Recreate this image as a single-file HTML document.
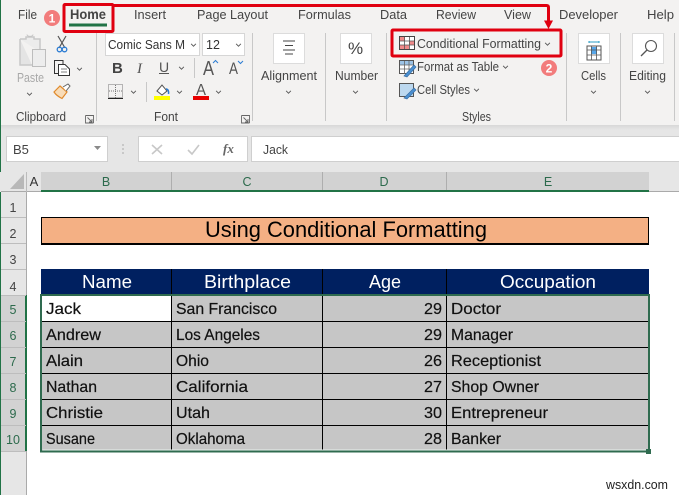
<!DOCTYPE html>
<html><head><meta charset="utf-8"><style>
html,body{margin:0;padding:0;width:679px;height:495px;overflow:hidden;background:#fff}
svg{display:block}
text{font-family:"Liberation Sans",sans-serif}
.t{font-size:13px;fill:#444}
.d{font-size:16px;fill:#111;stroke:#111;stroke-width:.2px}
.h{font-size:18.500px;fill:#fff}
.r{font-size:12.500px;fill:#444;text-anchor:middle}
.s{font-size:12.500px;fill:#2c6a4c;text-anchor:middle}
</style></head><body>
<svg width="679" height="495" viewBox="0 0 679 495" xmlns="http://www.w3.org/2000/svg">
<defs><linearGradient id="sh" x1="0" y1="0" x2="0" y2="1"><stop offset="0" stop-color="#d8d8d8"/><stop offset="1" stop-color="#e6e6e6"/></linearGradient>
<symbol id="chev" viewBox="0 0 8 5" overflow="visible"><path d="M1 1L4 4L7 1" fill="none" stroke="#555" stroke-width="1.100"/></symbol></defs>

<!-- ribbon -->
<rect width="679" height="125" fill="#f3f2f1"/>
<rect y="125" width="679" height="5" fill="url(#sh)"/>
<rect y="130" width="679" height="62" fill="#e6e6e6"/>
<rect x="0" y="0" width="1" height="495" fill="#217346"/>

<!-- tabs -->
<text class="t" x="18" y="19" textLength="19" lengthAdjust="spacingAndGlyphs">File</text>
<text x="70" y="19" font-size="13.500" font-weight="bold" fill="#444" textLength="36" lengthAdjust="spacingAndGlyphs">Home</text>
<rect x="69" y="23.500" width="38" height="3" fill="#217346"/>
<text class="t" x="134" y="19" textLength="32" lengthAdjust="spacingAndGlyphs">Insert</text>
<text class="t" x="197" y="19" textLength="71" lengthAdjust="spacingAndGlyphs">Page Layout</text>
<text class="t" x="298" y="19" textLength="53" lengthAdjust="spacingAndGlyphs">Formulas</text>
<text class="t" x="380" y="19" textLength="27" lengthAdjust="spacingAndGlyphs">Data</text>
<text class="t" x="436" y="19" textLength="40" lengthAdjust="spacingAndGlyphs">Review</text>
<text class="t" x="504" y="19" textLength="27" lengthAdjust="spacingAndGlyphs">View</text>
<text class="t" x="559" y="19" textLength="59" lengthAdjust="spacingAndGlyphs">Developer</text>
<text class="t" x="647" y="19" textLength="27" lengthAdjust="spacingAndGlyphs">Help</text>

<!-- separators -->
<g fill="#c8c8c8"><rect x="96" y="33" width="1" height="88"/><rect x="252" y="33" width="1" height="88"/><rect x="325" y="33" width="1" height="88"/><rect x="386" y="33" width="1" height="88"/><rect x="566" y="33" width="1" height="88"/><rect x="620" y="33" width="1" height="88"/><rect x="674" y="33" width="1" height="88"/><rect x="194" y="58" width="1" height="20"/><rect x="146" y="82" width="1" height="20"/></g>

<!-- clipboard -->
<path d="M20 39H26V37H34V39H40V52" fill="#ececec" stroke="#c8c8c8" stroke-width="1.500"/>
<path d="M20 39V65H32" fill="#e4e4e4" stroke="#c8c8c8" stroke-width="1.500"/>
<path d="M27 34.500C27 37 33 37 33 34.500" fill="none" stroke="#c4c4c4"/>
<rect x="32.500" y="49.500" width="13" height="17" fill="#ededed" stroke="#bdbdbd"/>
<text x="17" y="82" font-size="12.500" fill="#a8a8a8" textLength="27" lengthAdjust="spacingAndGlyphs">Paste</text>
<use href="#chev" x="26" y="92" width="7" height="4"/>
<path d="M58 36L65 48M66 36L59 48" stroke="#555" stroke-width="1.200" fill="none"/>
<circle cx="59.500" cy="49.500" r="2.300" fill="none" stroke="#2b7cd3" stroke-width="1.300"/>
<circle cx="64.500" cy="49.500" r="2.300" fill="none" stroke="#2b7cd3" stroke-width="1.300"/>
<path d="M58.500 73.500H54.500V60.500H63V64" fill="none" stroke="#333"/>
<path d="M58.500 64.500H65L69.500 69V75.500H58.500Z" fill="#fff" stroke="#333"/>
<path d="M61 69H67M61 72H67" stroke="#555" stroke-width=".8"/>
<use href="#chev" x="76" y="67" width="7" height="4"/>
<path d="M54 92L60 86L67 92L62 98.500C59 97 56 95 54 92Z" fill="#f8dcb8" stroke="#e08a2c" stroke-width="1.200"/>
<path d="M63 87L68 84L70 86L66 91" fill="#fff" stroke="#666"/>
<text x="16" y="121" font-size="12.500" fill="#444" textLength="50" lengthAdjust="spacingAndGlyphs">Clipboard</text>
<path d="M85.500 115.500H93.500V123M85.500 115.500V123H93.500M87.500 117.500L92 122M92 119V122H89" fill="none" stroke="#666" stroke-width=".9"/>

<!-- font -->
<rect x="105.500" y="33.500" width="94" height="22" fill="#fff" stroke="#d6d6d6"/>
<rect x="202.500" y="33.500" width="42" height="22" fill="#fff" stroke="#d6d6d6"/>
<text x="108" y="49" font-size="12.500" fill="#333" textLength="77" lengthAdjust="spacingAndGlyphs">Comic Sans M</text>
<use href="#chev" x="190" y="43" width="7" height="4"/>
<text x="206" y="49" font-size="12.500" fill="#333">12</text>
<use href="#chev" x="235" y="43" width="7" height="4"/>
<text x="112" y="73" font-size="15" font-weight="bold" fill="#444">B</text>
<text x="137" y="73" font-size="15" font-style="italic" fill="#555" style="font-family:'Liberation Serif',serif">I</text>
<text x="159" y="72" font-size="14" fill="#555">U</text><rect x="159" y="73" width="10" height="1" fill="#555"/>
<use href="#chev" x="178" y="66" width="7" height="4"/>
<text x="203" y="75" font-size="20" fill="#555" textLength="11" lengthAdjust="spacingAndGlyphs">A</text>
<path d="M213 63L215.500 60.500L218 63" fill="none" stroke="#2b7cd3"/>
<text x="229" y="74" font-size="17" fill="#555" textLength="9" lengthAdjust="spacingAndGlyphs">A</text>
<path d="M238 61L240.500 63.500L243 61" fill="none" stroke="#2b7cd3"/>
<rect x="108.500" y="84.500" width="14" height="13" fill="none" stroke="#777" stroke-dasharray="1 1"/>
<path d="M115.500 85V98M109 91H122" stroke="#777" stroke-dasharray="1 1"/>
<rect x="108" y="98" width="15" height="1" fill="#222"/>
<use href="#chev" x="130" y="90" width="7" height="4"/>
<path d="M157 91L162 85L167 91L162 95Z" fill="#fff" stroke="#555"/>
<path d="M166 89C168 89 169 91 168.500 94" fill="none" stroke="#2b7cd3" stroke-width="1.500"/>
<rect x="154" y="96" width="16" height="4" fill="#ffff00"/>
<use href="#chev" x="176" y="90" width="7" height="4"/>
<text x="196" y="95" font-size="16" fill="#555" textLength="10" lengthAdjust="spacingAndGlyphs">A</text>
<rect x="193" y="96" width="16" height="4" fill="#e80000"/>
<use href="#chev" x="215" y="90" width="7" height="4"/>
<text x="154" y="121" font-size="12.500" fill="#444" textLength="24" lengthAdjust="spacingAndGlyphs">Font</text>
<path d="M241.500 115.500H249.500V123M241.500 115.500V123H249.500M243.500 117.500L248 122M248 119V122H245" fill="none" stroke="#666" stroke-width=".9"/>

<!-- alignment -->
<rect x="273.500" y="33.500" width="31" height="30" fill="#fff" stroke="#dcdcdc"/>
<path d="M283 41H295M285 45.500H293M283 50H295M285 54H293" stroke="#444"/>
<text class="t" x="261" y="80" textLength="56" lengthAdjust="spacingAndGlyphs">Alignment</text>
<use href="#chev" x="285" y="90" width="7" height="4"/>

<!-- number -->
<rect x="340.500" y="33.500" width="31" height="30" fill="#fff" stroke="#dcdcdc"/>
<text x="348" y="54" font-size="17" fill="#444">%</text>
<text class="t" x="335" y="80" textLength="43" lengthAdjust="spacingAndGlyphs">Number</text>
<use href="#chev" x="352" y="90" width="7" height="4"/>

<!-- styles -->
<rect x="399.500" y="36.500" width="15" height="13" fill="#fff" stroke="#444"/>
<rect x="400" y="37" width="5" height="4" fill="#f08a8a"/><rect x="409" y="41" width="5" height="4" fill="#f08a8a"/><rect x="400" y="45" width="9" height="4" fill="#f08a8a"/>
<path d="M404.500 37V49M409.500 37V49M400 41H414M400 45H414" stroke="#555" stroke-width=".8"/>
<text class="t" x="417" y="48" textLength="124" lengthAdjust="spacingAndGlyphs">Conditional Formatting</text>
<use href="#chev" x="544" y="42" width="7" height="4"/>
<rect x="399.500" y="60.500" width="14" height="13" fill="#fff" stroke="#555"/>
<rect x="400" y="61" width="13" height="4" fill="#9cc3e6"/>
<path d="M404.500 61V74M409 61V74M400 65H413M400 69H413" stroke="#666" stroke-width=".8"/>
<path d="M404 76L414 65L416 67L407 77Z" fill="#4a8fd0" stroke="#3a6fa5" stroke-width=".7"/>
<text class="t" x="417" y="71" textLength="82" lengthAdjust="spacingAndGlyphs">Format as Table</text>
<use href="#chev" x="502" y="65" width="7" height="4"/>
<rect x="399.500" y="83.500" width="14" height="13" fill="#bcd8ef" stroke="#555"/>
<path d="M404 98L414 88L416 90L407 99Z" fill="#4a8fd0" stroke="#3a6fa5" stroke-width=".7"/>
<text class="t" x="417" y="94" textLength="53" lengthAdjust="spacingAndGlyphs">Cell Styles</text>
<use href="#chev" x="473" y="88" width="7" height="4"/>
<text x="462" y="121" font-size="12.500" fill="#444" textLength="29" lengthAdjust="spacingAndGlyphs">Styles</text>

<!-- cells -->
<rect x="578.500" y="33.500" width="31" height="30" fill="#fff" stroke="#dcdcdc"/>
<rect x="587" y="46" width="14" height="14" fill="#fff" stroke="#555"/>
<rect x="591" y="47" width="6" height="7" fill="#55a6ea"/>
<path d="M591.500 46V60M596.500 46V60M587 50H601M587 55H601" stroke="#555" stroke-width=".8"/>
<path d="M589 42H599M589 41V43M599 41V43" stroke="#2b9cc4"/>
<text class="t" x="581" y="80" textLength="25" lengthAdjust="spacingAndGlyphs">Cells</text>
<use href="#chev" x="590" y="90" width="7" height="4"/>

<!-- editing -->
<rect x="632.500" y="33.500" width="31" height="30" fill="#fff" stroke="#dcdcdc"/>
<circle cx="651" cy="46" r="5.500" fill="none" stroke="#555" stroke-width="1.100"/>
<path d="M647 50L641 56" stroke="#555" stroke-width="1.300"/>
<text class="t" x="629" y="80" textLength="37" lengthAdjust="spacingAndGlyphs">Editing</text>
<use href="#chev" x="644" y="90" width="7" height="4"/>

<!-- red annotations -->
<rect x="64" y="4.500" width="49" height="27" fill="none" stroke="#e00010" stroke-width="3" rx="1"/>
<path d="M113 5.500H546.500Q548.500 5.500 548.500 7.500V22" fill="none" stroke="#e00010" stroke-width="3"/>
<path d="M544 20.500H553L548.500 29Z" fill="#e00010"/>
<rect x="392" y="30" width="169" height="26" fill="none" stroke="#e00010" stroke-width="3" rx="1"/>
<circle cx="52" cy="18" r="8" fill="#f27c7c"/>
<text x="52" y="22.500" font-size="12" font-weight="bold" fill="#fff" text-anchor="middle">1</text>
<circle cx="549" cy="68" r="8" fill="#f27c7c"/>
<text x="549" y="72.500" font-size="12" font-weight="bold" fill="#fff" text-anchor="middle">2</text>

<!-- formula bar -->
<rect x="6.500" y="136.500" width="101" height="25" fill="#fff" stroke="#cfcfcf"/>
<text x="13" y="154" font-size="13" fill="#444">B5</text>
<path d="M94 146H101L97.500 150Z" fill="#8a8a8a"/>
<path d="M123 144.500V145.500M123 148.500V149.500M123 152.500V153.500" stroke="#aaa" stroke-width="2"/>
<rect x="138.500" y="136.500" width="109" height="25" fill="#fff" stroke="#cfcfcf"/>
<path d="M152 145L162 154M162 145L152 154" stroke="#c8c8c8" stroke-width="1.600"/>
<path d="M188 150L192 154L199 145" fill="none" stroke="#c8c8c8" stroke-width="1.600"/>
<text x="223" y="153" font-size="13" font-style="italic" fill="#666" style="font-family:'Liberation Serif',serif" font-weight="bold">fx</text>
<rect x="251.500" y="136.500" width="428" height="25" fill="#fff" stroke="#cfcfcf"/>
<text x="263" y="154" font-size="13" fill="#444" textLength="25" lengthAdjust="spacingAndGlyphs">Jack</text>

<!-- col headers -->
<rect x="0" y="172" width="679" height="20" fill="#e6e6e6"/>
<rect x="1" y="191" width="678" height="1" fill="#aaa"/>
<path d="M24 174V189H10Z" fill="#b8b8b8"/>
<rect x="26" y="172" width="1" height="20" fill="#bbb"/>
<rect x="41" y="172" width="608" height="18" fill="#d2d2d2"/>
<rect x="41" y="190" width="608" height="2" fill="#217346"/>
<rect x="171" y="172" width="1" height="18" fill="#aeaeae"/><rect x="322" y="172" width="1" height="18" fill="#aeaeae"/><rect x="446" y="172" width="1" height="18" fill="#aeaeae"/>
<text x="34" y="186" font-size="13" fill="#333" text-anchor="middle">A</text>
<text class="s" x="106" y="186">B</text><text class="s" x="247" y="186">C</text><text class="s" x="384" y="186">D</text><text class="s" x="548" y="186">E</text>

<!-- row headers -->
<rect x="1" y="192" width="25" height="303" fill="#e6e6e6"/>
<rect x="26" y="192" width="1" height="303" fill="#aaa"/>
<rect x="1" y="295" width="25" height="156" fill="#d2d2d2"/>
<rect x="25" y="295" width="2" height="156" fill="#217346"/>
<g fill="#bdbdbd"><rect x="1" y="217" width="25" height="1"/><rect x="1" y="243" width="25" height="1"/><rect x="1" y="269" width="25" height="1"/><rect x="1" y="295" width="25" height="1"/><rect x="1" y="321" width="25" height="1"/><rect x="1" y="347" width="25" height="1"/><rect x="1" y="373" width="25" height="1"/><rect x="1" y="399" width="25" height="1"/><rect x="1" y="425" width="25" height="1"/><rect x="1" y="451" width="25" height="1"/></g>
<text class="r" x="13" y="212">1</text><text class="r" x="13" y="238">2</text><text class="r" x="13" y="264">3</text><text class="r" x="13" y="291">4</text>
<text class="s" x="13" y="314">5</text><text class="s" x="13" y="340">6</text><text class="s" x="13" y="366">7</text><text class="s" x="13" y="392">8</text><text class="s" x="13" y="418">9</text><text class="s" x="13" y="444">10</text>

<!-- title -->
<rect x="41.500" y="217.500" width="607" height="26" fill="#f4b084" stroke="#000"/>
<rect x="41" y="244" width="608" height="1" fill="#000"/>
<text x="205" y="237" font-size="22" fill="#000" textLength="282" lengthAdjust="spacingAndGlyphs">Using Conditional Formatting</text>

<!-- table -->
<rect x="41" y="269" width="608" height="26" fill="#002060"/>
<rect x="171" y="269" width="1" height="26" fill="#000"/><rect x="322" y="269" width="1" height="26" fill="#000"/><rect x="446" y="269" width="1" height="26" fill="#000"/>
<text class="h" x="82" y="288" textLength="50" lengthAdjust="spacingAndGlyphs">Name</text>
<text class="h" x="204" y="288" textLength="87" lengthAdjust="spacingAndGlyphs">Birthplace</text>
<text class="h" x="369" y="288" textLength="32" lengthAdjust="spacingAndGlyphs">Age</text>
<text class="h" x="500" y="288" textLength="96" lengthAdjust="spacingAndGlyphs">Occupation</text>

<rect x="41" y="295" width="608" height="156" fill="#c6c6c6"/>
<rect x="42" y="296" width="129" height="25" fill="#fff"/>
<g fill="#000"><rect x="42" y="321" width="606" height="1"/><rect x="42" y="347" width="606" height="1"/><rect x="42" y="373" width="606" height="1"/><rect x="42" y="399" width="606" height="1"/><rect x="42" y="425" width="606" height="1"/>
<rect x="171" y="296" width="1" height="154"/><rect x="322" y="296" width="1" height="154"/><rect x="446" y="296" width="1" height="154"/></g>

<text class="d" x="46" y="314" textLength="35" lengthAdjust="spacingAndGlyphs">Jack</text>
<text class="d" x="46" y="340" textLength="55" lengthAdjust="spacingAndGlyphs">Andrew</text>
<text class="d" x="46" y="366" textLength="37" lengthAdjust="spacingAndGlyphs">Alain</text>
<text class="d" x="46" y="392" textLength="51" lengthAdjust="spacingAndGlyphs">Nathan</text>
<text class="d" x="46" y="418" textLength="57" lengthAdjust="spacingAndGlyphs">Christie</text>
<text class="d" x="46" y="444" textLength="49" lengthAdjust="spacingAndGlyphs">Susane</text>

<text class="d" x="176" y="314" textLength="101" lengthAdjust="spacingAndGlyphs">San Francisco</text>
<text class="d" x="176" y="340" textLength="84" lengthAdjust="spacingAndGlyphs">Los Angeles</text>
<text class="d" x="176" y="366" textLength="33" lengthAdjust="spacingAndGlyphs">Ohio</text>
<text class="d" x="176" y="392" textLength="72" lengthAdjust="spacingAndGlyphs">California</text>
<text class="d" x="176" y="418" textLength="34" lengthAdjust="spacingAndGlyphs">Utah</text>
<text class="d" x="176" y="444" textLength="69" lengthAdjust="spacingAndGlyphs">Oklahoma</text>

<text class="d" x="424" y="314" textLength="18" lengthAdjust="spacingAndGlyphs">29</text>
<text class="d" x="424" y="340" textLength="18" lengthAdjust="spacingAndGlyphs">29</text>
<text class="d" x="424" y="366" textLength="18" lengthAdjust="spacingAndGlyphs">26</text>
<text class="d" x="424" y="392" textLength="18" lengthAdjust="spacingAndGlyphs">27</text>
<text class="d" x="424" y="418" textLength="18" lengthAdjust="spacingAndGlyphs">30</text>
<text class="d" x="424" y="444" textLength="18" lengthAdjust="spacingAndGlyphs">28</text>

<text class="d" x="451" y="314" textLength="50" lengthAdjust="spacingAndGlyphs">Doctor</text>
<text class="d" x="451" y="340" textLength="62" lengthAdjust="spacingAndGlyphs">Manager</text>
<text class="d" x="451" y="366" textLength="90" lengthAdjust="spacingAndGlyphs">Receptionist</text>
<text class="d" x="451" y="392" textLength="88" lengthAdjust="spacingAndGlyphs">Shop Owner</text>
<text class="d" x="451" y="418" textLength="97" lengthAdjust="spacingAndGlyphs">Entrepreneur</text>
<text class="d" x="451" y="444" textLength="50" lengthAdjust="spacingAndGlyphs">Banker</text>

<!-- selection -->
<rect x="41" y="295" width="608" height="156.500" fill="none" stroke="#2f6b4f" stroke-width="2"/>
<rect x="42.500" y="449.500" width="605" height="1" fill="#e8f0ec"/>
<rect x="646" y="449" width="6" height="6" fill="#fff"/>
<rect x="646" y="449" width="5" height="5" fill="#2f6b4f"/>

<text x="606" y="489" font-size="13" fill="#222" textLength="62" lengthAdjust="spacingAndGlyphs">wsxdn.com</text>
</svg>
</body></html>
